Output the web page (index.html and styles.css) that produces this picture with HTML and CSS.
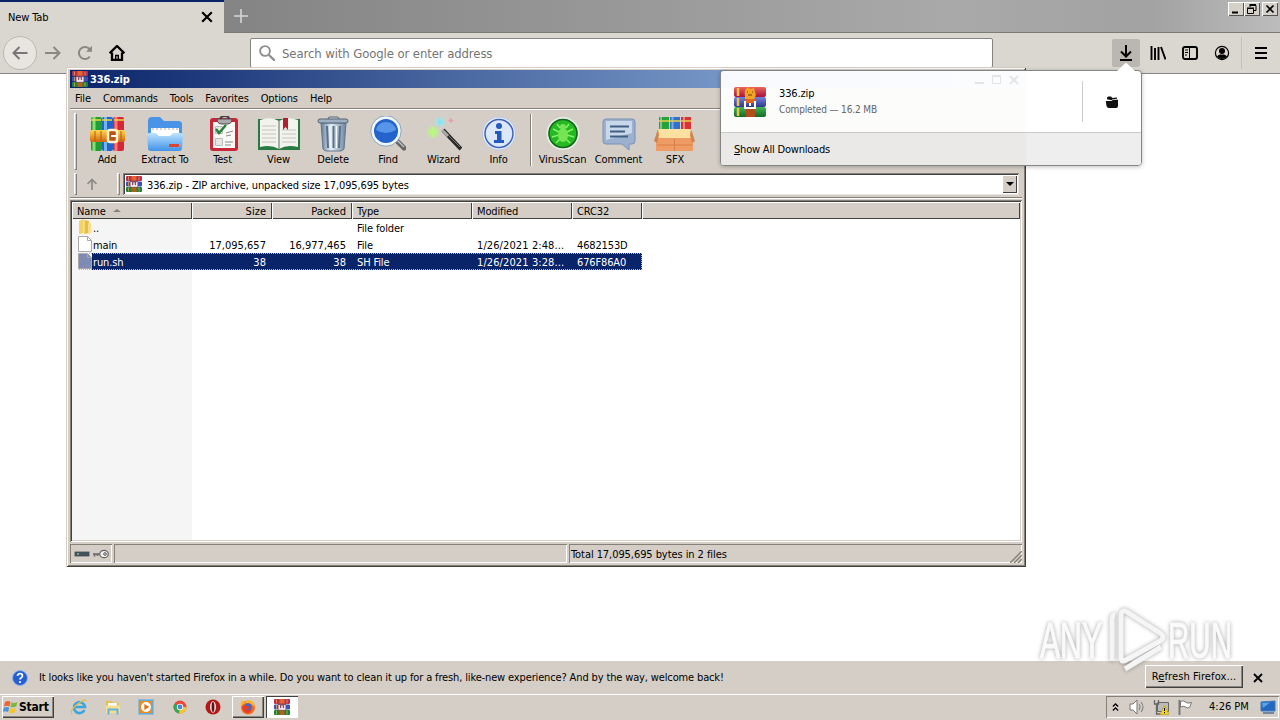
FILE: index.html
```html
<!DOCTYPE html>
<html lang="en">
<head>
    <meta charset="UTF-8" />
    <meta name="viewport" content="width=device-width, initial-scale=1.0"/>
    <title>New Tab</title>
    <link rel="stylesheet" href="styles.css">
</head>
<body>
    <!-- shared icons -->
    <svg class="defs">
        <linearGradient id="bookRed" x2="0" y2="1"><stop stop-color="#ed655c"/><stop offset="1" stop-color="#a8123f"/></linearGradient>
        <linearGradient id="bookBlue" x2="0" y2="1"><stop stop-color="#7383dc"/><stop offset="1" stop-color="#30398f"/></linearGradient>
        <linearGradient id="bookGreen" x2="0" y2="1"><stop stop-color="#42b655"/><stop offset="1" stop-color="#126b25"/></linearGradient>
        <linearGradient id="gold" x2="0" y2="1"><stop stop-color="#ffda51"/><stop offset="1" stop-color="#d3650d"/></linearGradient>
        <linearGradient id="steel"><stop stop-color="#627c98"/><stop offset=".4" stop-color="#e4eff8"/><stop offset="1" stop-color="#6c839d"/></linearGradient>
        <linearGradient id="sky" x2="0" y2="1"><stop stop-color="#bce4ff"/><stop offset="1" stop-color="#4192e8"/></linearGradient>
        <symbol id="winrar" viewBox="0 0 16 16">
            <rect y="0" width="16" height="5" rx="1" fill="#b92c50"/>
            <rect y="5.5" width="16" height="5" rx="1" fill="#4050b0"/>
            <rect y="11" width="16" height="5" rx="1" fill="#1c8236"/>
            <path d="M2.500 .5v4M2.500 6v4M2.500 11.500v4M13 .5v4M13 11.500v4" stroke="#d6a85d" stroke-width=".8"/>
            <path d="M5.500 0h5v5h-5z" fill="#e8622b"/>
            <path d="M5.500 11h5v5h-5z" fill="#b0611e"/>
            <rect x="4" y="4.500" width="8" height="7" rx="1" fill="#8c4a63"/>
            <path d="M5.200 6v4h5.600V6M8 6.500v3" stroke="#fff" stroke-width="1.300" fill="none"/>
        </symbol>
        <symbol id="close" viewBox="0 0 10 10"><path d="M1 1l8 8M9 1L1 9" stroke="currentColor" stroke-width="1.8"/></symbol>
        <symbol id="page" viewBox="0 0 14 16"><path d="M.5.5h9l4 4v11H.5z" fill="currentColor" stroke="#a9a9a9"/><path d="M9.5.5v4h4" fill="none" stroke="#a9a9a9"/></symbol>
    </svg>

    <div class="browser">
        <header class="tabstrip">
            <div class="tab"><span>New Tab</span><svg class="tab-close"><use href="#close"/></svg></div>
            <svg class="new-tab" viewBox="0 0 14 14"><path d="M7 0v14M0 7h14" stroke="#d5d5d5" stroke-width="1.6"/></svg>
            <div class="caption-buttons">
                <svg class="cap" viewBox="0 0 16 14"><path d="M4 10.500h6" stroke="#000" stroke-width="2"/></svg>
                <svg class="cap" viewBox="0 0 16 14"><path d="M6 3.500h6v5h-2M6 2.500h6M6 2v3M3.500 6.500h6v5h-6zM3 6h7" stroke="#000" fill="none"/></svg>
                <svg class="cap cap-x" viewBox="0 0 16 14"><path d="M4.500 3.500l7 7M11.500 3.500l-7 7" stroke="#000" stroke-width="1.700"/></svg>
            </div>
        </header>

        <nav class="navbar">
            <div class="nav-back"><svg viewBox="0 0 16 16"><path d="M15.500 8H1.500M7.500 2l-6 6 6 6" fill="none" stroke="#777" stroke-width="2"/></svg></div>
            <svg class="nav-icon" viewBox="0 0 16 16"><path d="M0 8h14.500M8.500 2l6 6-6 6" fill="none" stroke="#8a8884" stroke-width="2"/></svg>
            <svg class="nav-icon" viewBox="0 0 16 16"><path d="M12.800 11.500A6 6 0 1 1 12 3.600l2 2" fill="none" stroke="#8a8884" stroke-width="2"/><path d="M15 .7v6H9z" fill="#8a8884"/></svg>
            <svg class="nav-icon home" viewBox="0 0 16 16"><path d="M.6 8.300L8 1l7.400 7.300M3 7.500V15h10V7.500" fill="none" stroke="#000" stroke-width="2.300"/><path d="M6.700 15v-4.500h2.600V15" fill="none" stroke="#000" stroke-width="1.400"/></svg>
            <div class="urlbar">
                <svg viewBox="0 0 16 16"><circle cx="6" cy="6" r="4.900" fill="none" stroke="#8f8f8f" stroke-width="1.900"/><path d="M9.700 9.700l6 6" stroke="#8f8f8f" stroke-width="2.300"/></svg>
                <span>Search with Google or enter address</span>
            </div>
            <div class="nav-tools">
                <div class="downloads-btn"><svg viewBox="0 0 16 16"><path d="M8 0v11M3 6.500l5 5 5-5M2 15h12" fill="none" stroke="#000" stroke-width="2"/></svg></div>
                <svg viewBox="0 0 16 16"><path d="M1.500 1v14M5 3v12M8.500 2v13M11 2l4.500 12.500" stroke="#000" stroke-width="1.900"/></svg>
                <svg viewBox="0 0 16 16"><rect x="1" y="2" width="14" height="12" rx="2" fill="none" stroke="#000" stroke-width="1.900"/><path d="M7.500 2v12M3 5h3M3 7.500h3M3 10h2" stroke="#000"/></svg>
                <svg viewBox="0 0 16 16"><circle cx="8" cy="8" r="6.600" fill="none" stroke="#000" stroke-width="1.200"/><circle cx="8" cy="6" r="3" /><path d="M3 11.500q1.500-2 3.200-2h3.600q1.700 0 3.200 2-2 2.500-5 2.500t-5-2.500"/></svg>
                <i class="nav-line"></i>
                <svg class="burger" viewBox="0 0 16 16"><path d="M2 3h12M2 8h12M2 13h12" stroke="#000" stroke-width="2"/></svg>
            </div>
        </nav>

        <main class="page"></main>

        <div class="notice">
            <svg class="notice-icon" viewBox="0 0 16 16"><circle cx="8" cy="8" r="7.500" fill="#255fd0" stroke="#90b3ed"/><path d="M5.500 6q0-2.300 2.500-2.300T10.500 6q0 1-1.300 1.700T8 9.500" stroke="#fff" stroke-width="1.700" fill="none"/><circle cx="8" cy="12" r="1.100" fill="#fff"/></svg>
            <span class="notice-text">It looks like you haven't started Firefox in a while. Do you want to clean it up for a fresh, like-new experience? And by the way, welcome back!</span>
            <button class="refresh">R<u>e</u>fresh Firefox...</button>
            <svg class="notice-close"><use href="#close"/></svg>
        </div>

        <footer class="taskbar">
            <button class="start">
                <svg viewBox="0 0 16 16"><path d="M2 3q3-2 5.500 0L6.500 7.500q-3-1.500-5.500 0z" fill="#ef6331"/><path d="M8.500 3.300q3 1.300 6-.3l-1.300 4.500q-3 1.500-5.700.3z" fill="#76ba3c"/><path d="M.8 8.700q3-1.500 5.500 0L5 13q-3-1.500-5.200 0z" fill="#4894dc"/><path d="M7.300 9q3 1.500 5.700 0l-1.300 4.400q-3 1.500-5.500 0z" fill="#f9c32e"/></svg>
                <b>Start</b>
            </button>
            <div class="launch">
                <svg viewBox="0 0 16 16"><path d="M13.500 11A5.500 5.500 0 1 1 14 8H4" fill="none" stroke="#39a6df" stroke-width="2.600"/><path d="M1 15Q-2 12 6 5.500T15.500 2" fill="none" stroke="#e5bd40" stroke-width="1.300"/></svg>
                <svg viewBox="0 0 16 16"><path d="M1 2h6l1 1.500h6V14H1z" fill="#e3bf55"/><path d="M3 4h9v5H3z" fill="#fff"/><path d="M1 6.500h14V14H1z" fill="#f5df92"/><path d="M3.500 15.500v-5h9v5" stroke="#65b4d8" stroke-width="2" fill="none"/></svg>
                <svg viewBox="0 0 16 16"><rect x=".5" y=".5" width="15" height="15" fill="#62abd8" stroke="#91bbd3"/><path d="M2 2h12v12H2z" fill="#f18b1e"/><circle cx="8" cy="8" r="5" fill="#fff"/><path d="M6.300 5v6l5-3z" fill="#e47212"/></svg>
                <svg viewBox="0 0 16 16"><circle cx="8" cy="8" r="6.500" fill="#e84838"/><path d="M8 8L2.400 4.700A6.500 6.500 0 0 0 7 14.400z" fill="#37a552"/><path d="M8 8h6.500a6.500 6.500 0 0 1-7.500 6.400z" fill="#f4c72d"/><circle cx="8" cy="8" r="3.200" fill="#fff"/><circle cx="8" cy="8" r="2.400" fill="#4688dc"/></svg>
                <svg viewBox="0 0 16 16"><ellipse cx="8" cy="8" rx="7.500" ry="7.500" fill="#b31717"/><ellipse cx="8" cy="8" rx="3" ry="5.700" fill="#f1e6e2"/><ellipse cx="8" cy="8" rx="1.400" ry="5" fill="#5a1717"/></svg>
            </div>
            <div class="task"><svg viewBox="0 0 16 16"><circle cx="8" cy="8.500" r="7" fill="#f46b20"/><path d="M1 8Q0 3 3 1l1 3q3-4 8-2 3 3 3 7-3-5-8-5-4 0-6 4" fill="#ffb52a"/><circle cx="8" cy="8" r="3.800" fill="#4269c9"/><path d="M2 8q3-3 5-1l3 1q-2 3-4 2 2 3 6 0-1 4-5 4-4-1-5-6" fill="#e83c27"/></svg></div>
            <div class="task active"><svg><use href="#winrar"/></svg></div>
            <div class="tray">
                <svg class="chevrons" viewBox="0 0 8 10"><path d="M1 4.500l3-3 3 3M1 9l3-3 3 3" fill="none" stroke="#000" stroke-width="1.500"/></svg>
                <svg viewBox="0 0 16 16"><path d="M1 5h3l4-4v14l-4-4H1z" fill="#fff" stroke="#777"/><path d="M10 5q2 3 0 6M12 3q4 5 0 10" fill="none" stroke="#888" stroke-width="1.200"/></svg>
                <svg viewBox="0 0 16 16"><path d="M4.500 3.500h11v9h-11z" fill="#bbb" stroke="#666"/><path d="M1.500 1v4h4V1M3.500 5v10h4" fill="none" stroke="#666" stroke-width="1.300"/><path d="M11.500 6.500l4.500 9H7z" fill="#f5d420" stroke="#b39610" stroke-width=".6"/><path d="M11.500 9v3M11.500 13v1.200" stroke="#000"/></svg>
                <svg class="flag" viewBox="0 0 16 16"><path d="M2.500 1v15" stroke="#777" stroke-width="2"/><path d="M3.500 2.500q3-1.500 5 .5t6 .5l-2 5q-2 1-4-.5t-5 0z" fill="#fff" stroke="#777"/></svg>
                <span class="clock">4:26 PM</span>
                <svg class="desktop" viewBox="0 0 16 16"><path d="M1 3l14-1v10H1z" fill="#2567bd" stroke="#3c7abf"/><path d="M2 4l8-.5L3 9z" fill="#5ba4e8"/><path d="M3 14h11" stroke="#546f8f" stroke-width="1.500"/></svg>
            </div>
        </footer>
    </div>

    <section class="window">
        <div class="titlebar"><svg><use href="#winrar"/></svg><b>336.zip</b></div>
        <div class="menubar"><span>File</span><span>Commands</span><span>Tools</span><span>Favorites</span><span>Options</span><span>Help</span></div>
        <div class="toolbar">
            <i class="grip"></i>
            <div class="tool w58">
                <svg viewBox="0 0 36 36"><rect x="2" y="1" width="11" height="34" rx="2" fill="#239d36"/><path d="M5 1v34" stroke="#8add74" stroke-width="3"/><rect x="13" y="1" width="11" height="34" rx="2" fill="#2563c8"/><path d="M16.500 1v34" stroke="#6fb5f0" stroke-width="3"/><rect x="24" y="1" width="11" height="34" rx="2" fill="#d62735"/><path d="M27 1v34" stroke="#ff7776" stroke-width="3"/><path d="M2 4h10M13 4h10M25 4h10" stroke="#f0d646" stroke-width="1.500"/><rect x="1" y="14" width="35" height="12" rx="2" fill="url(#gold)"/><path d="M6 15v10M12 15v10M32 15v10" stroke="#b75a10"/><rect x="19" y="14" width="9" height="12" rx="2" fill="#b4541a" stroke="#fff2cc" stroke-width="2.500"/><path d="M22 20h5" stroke="#fff" stroke-width="2"/></svg>
                <span>Add</span>
            </div>
            <div class="tool w58">
                <svg viewBox="0 0 36 36"><path d="M1 5q0-4 4-4h8l4 4h14q4 0 4 3v12H1z" fill="#4a94e8"/><path d="M4 12h28v10H4z" fill="#fff"/><path d="M5 13h26" stroke="#aaa" stroke-dasharray="2 2"/><path d="M0 19q0-2 3-2h6l3 3h11l3-3h7q3 0 3 2l-1 13q0 3-3 3H4q-3 0-3-3z" fill="url(#sky)"/><rect x="22" y="28" width="10" height="3" rx="1" fill="#df412f"/></svg>
                <span>Extract To</span>
            </div>
            <div class="tool w57">
                <svg viewBox="0 0 36 36"><rect x="5" y="2" width="28" height="33" rx="3" fill="#c92637"/><path d="M8 6h22v26H8z" fill="#f9f9f5"/><path d="M12 3q0 5 5 5h5q5 0 5-5z" fill="#aaa" stroke="#534b50"/><path d="M15 3q1-3 5-3t4 3" fill="none" stroke="#473b41" stroke-width="2"/><path d="M10.500 10.500h7v7h-7zM10.500 22.500h7v7h-7z" fill="#e6e6e6" stroke="#bbb"/><path d="M11 13l3 4 7-8" fill="none" stroke="#258137" stroke-width="2.400"/><path d="M21 17l7-2M21 20l5-1M20 26h8M20 29h6" stroke="#888"/></svg>
                <span>Test</span>
            </div>
            <div class="tool w55">
                <svg class="wide" viewBox="0 0 42 36"><path d="M0 3h42v31H0z" fill="#277a42"/><path d="M2 4q11-4 19 1 8-5 19-1v27q-11-3-19 2-8-5-19-2z" fill="#f3f3ed"/><path d="M21 5v28" stroke="#8a9991" stroke-width="1.500"/><path d="M4 10h14M4 14h14M4 18h14M4 22h14M4 26h14M24 14h14M24 18h14M24 22h14M24 26h14" stroke="#c4c5bd"/><path d="M25 2h5v12l-2.500-3-2.500 3z" fill="#b3202d"/></svg>
                <span>View</span>
            </div>
            <div class="tool w54">
                <svg viewBox="0 0 36 36"><path d="M6 7h25l-2 26q-1 2-4 2H12q-3 0-4-2z" fill="url(#steel)" stroke="#61768c"/><path d="M12 10l1 22M18.500 10v22M25 10l-1 22" stroke="#5a7086" stroke-width="2"/><path d="M14.500 10l1 22M21.500 10v22" stroke="#f0f7fd"/><rect x="3" y="3" width="30" height="4" rx="2" fill="#9eb1c2" stroke="#526477"/><path d="M13 3q0-2 2-2h7q2 0 2 2" fill="none" stroke="#526477"/></svg>
                <span>Delete</span>
            </div>
            <div class="tool w56">
                <svg viewBox="0 0 36 36"><path d="M26 24l8 8" stroke="#666" stroke-width="5" stroke-linecap="round"/><path d="M26 23l8 8" stroke="#bec3c4" stroke-width="1.500"/><circle cx="16" cy="15" r="13.500" fill="#2463cb" stroke="#edf6fa" stroke-width="3"/><circle cx="16" cy="15" r="15.200" fill="none" stroke="#7a9cb9" stroke-width=".8"/><path d="M6 14q2-8 10-8t10 8q-10 6-20 0" fill="#5695e8"/></svg>
                <span>Find</span>
            </div>
            <div class="tool w55">
                <svg viewBox="0 0 36 36"><path d="M17 14l18 19" stroke="#292929" stroke-width="4"/><path d="M16 14l6 6" stroke="#aaa" stroke-width="3"/><path d="M22 19l12 12" stroke="#777"/><circle cx="7" cy="16" r="6" fill="#b6f589" opacity=".55"/><path d="M7 10l1.500 4 4 2-4 1.500-1.500 4-2-4-4-1.500 4-2z" fill="#baf780"/><circle cx="14" cy="6" r="5" fill="#9de9f0" opacity=".6"/><path d="M14 1l1 4 4 1-4 1-1 4-2-4-3-1 3-1z" fill="#88e4ef"/><path d="M25 2v5M22.500 4.500h5" stroke="#ee9ca4" stroke-width="1.500"/></svg>
                <span>Wizard</span>
            </div>
            <div class="tool w55">
                <svg viewBox="0 0 36 36"><circle cx="18" cy="17.500" r="16.500" fill="#e8edf6" stroke="#bac9e6"/><circle cx="18" cy="17.500" r="14" fill="#dce7fb" stroke="#3b62b9" stroke-width="1.500"/><circle cx="18" cy="10" r="3" fill="#2559bd"/><path d="M14 15h6.500v9H23v3H13v-3h3v-6h-2z" fill="#2559bd"/></svg>
                <span>Info</span>
            </div>
            <i class="tool-line"></i>
            <div class="tool w55">
                <svg viewBox="0 0 36 36"><circle cx="18" cy="17.500" r="15.500" fill="#14961c" stroke="#e5eee0" stroke-width="2"/><circle cx="18" cy="17.500" r="14" fill="#25ba23" stroke="#176620" stroke-width="1.500"/><g fill="none" stroke="#83f366" stroke-width="1.500"><path d="M12 8l3 4M24 8l-3 4M8 13l6 3M28 13l-6 3M7 21l7-2M29 21l-7-2M11 27l4-4M25 27l-4-4"/></g><ellipse cx="18" cy="19" rx="5" ry="7" fill="#78e455"/><circle cx="18" cy="11" r="3" fill="#78e455"/></svg>
                <span>VirusScan</span>
            </div>
            <div class="tool w57">
                <svg viewBox="0 0 36 36"><path d="M5 3h26q3 0 3 3v19q0 3-3 3h-3v6l-7-6H5q-3 0-3-3V6q0-3 3-3z" fill="#9cb1cf" stroke="#7891b4"/><path d="M5 5h26v12L5 24z" fill="#c9d8e9"/><path d="M9 10.500h19M9 15.500h15M9 20.500h18" stroke="#405d85" stroke-width="1.800"/></svg>
                <span>Comment</span>
            </div>
            <div class="tool w56">
                <svg class="wide" viewBox="0 0 42 36"><path d="M5 1h10v17H5z" fill="#25a338"/><path d="M16 1h10v17H16z" fill="#3271c7"/><path d="M27 1h10v17H27z" fill="#d93434"/><path d="M7 1v12M18.500 1v12M30 1v12" stroke="#fff" stroke-opacity=".4" stroke-width="2"/><path d="M5 5h10M16 5h10M27 5h10" stroke="#e7d04c" stroke-width="1.600"/><path d="M2 20h37v15H2z" fill="#ee9c63"/><path d="M4 13h33l2 9H2z" fill="#fae1a1"/><path d="M4 13l-4 12 3 2 2-8M37 13l4 12-3 2-2-8" fill="#d1824f"/><path d="M20.500 23v12M3 29h35" stroke="#d47e49"/></svg>
                <span>SFX</span>
            </div>
        </div>
        <div class="address">
            <i class="grip"></i>
            <svg class="up" viewBox="0 0 12 12"><path d="M6 12V1.500M1.500 6L6 1.500 10.500 6" fill="none" stroke="#8b8985" stroke-width="1.700"/></svg>
            <i class="grip"></i>
            <div class="path">
                <svg><use href="#winrar"/></svg>
                <span>336.zip - ZIP archive, unpacked size 17,095,695 bytes</span>
                <div class="drop"></div>
            </div>
        </div>
        <div class="files">
            <div class="row head">
                <span>Name <i class="sort"></i></span><span class="num">Size</span><span class="num">Packed</span><span>Type</span><span>Modified</span><span>CRC32</span><span></span>
            </div>
            <div class="row">
                <span class="name"><svg viewBox="0 0 14 16"><path d="M1 2l5-2v14l-5 1z" fill="#f2d263"/><path d="M6 1l5 1v12l-5 1z" fill="#e7bd42"/><path d="M10 4h3v10l-3 1z" fill="#f5df8c"/><path d="M6 1v14" stroke="#fff1a7"/></svg>..</span><span></span><span></span><span>File folder</span><span></span><span></span>
            </div>
            <div class="row">
                <span class="name"><svg class="sheet"><use href="#page"/></svg>main</span><span class="num">17,095,657</span><span class="num">16,977,465</span><span>File</span><span class="date">1/26/2021 2:48...</span><span>4682153D</span>
            </div>
            <div class="row selected">
                <span class="name"><svg class="sheet"><use href="#page"/></svg>run.sh</span><span class="num">38</span><span class="num">38</span><span>SH File</span><span class="date">1/26/2021 3:28...</span><span>676F86A0</span>
            </div>
        </div>
        <div class="status">
            <div class="status-icons">
                <svg viewBox="0 0 16 10"><rect x=".5" y="2.500" width="15" height="5" rx="1" fill="#434f59" stroke="#999"/><path d="M3 5h2" stroke="#b4e8c1"/></svg>
                <svg viewBox="0 0 16 10"><path d="M0 5h8M1.500 5v2.500M4.500 5v2" stroke="#666" stroke-width="1.600"/><ellipse cx="11" cy="5" rx="4.300" ry="3.700" fill="#eee" stroke="#666" stroke-width="1.200"/><circle cx="12" cy="5" r="1.300" fill="none" stroke="#555"/></svg>
            </div>
            <div class="status-pane"></div>
            <div class="status-total"><span>Total 17,095,695 bytes in 2 files</span><svg viewBox="0 0 12 12"><path d="M0 12L12 0M4 12l8-8M8 12l4-4" stroke="#858078" stroke-width="1.500"/></svg></div>
        </div>
    </section>

    <aside class="popup">
        <svg class="arrow" viewBox="0 0 20 10"><path d="M0 10l9-8.500q1-1 2 0l9 8.500z" fill="#fff"/></svg>
        <div class="ghost"><i class="ghost-min"></i><i class="ghost-max"></i><svg><use href="#close"/></svg></div>
        <div class="download">
            <svg class="archive" viewBox="0 0 32 32"><rect y="1" width="32" height="10" rx="2" fill="url(#bookRed)"/><rect y="11" width="32" height="10" rx="2" fill="url(#bookBlue)"/><rect y="21" width="32" height="10" rx="2" fill="url(#bookGreen)"/><path d="M4 2v8M4 12v8M4 22v8" stroke="#f0c449" stroke-width="2.500"/><path d="M12 21h9v10h-9z" fill="#b34d1b"/><path d="M11 11q-1-6 1-8l2-2 2 2 4-1 1 4q2 3-1 7H11z" fill="#f1a522"/><path d="M13 6h1M18 6h1M14 9h4" stroke="#6b350d" stroke-width="1.200"/><path d="M12 13h9v4h-9z" fill="#df6521"/><path d="M11 15v7h10v-7M16 17v3" fill="none" stroke="#fff" stroke-width="2"/></svg>
            <div class="download-info"><span class="download-name">336.zip</span><span class="download-state">Completed — 16.2 MB</span></div>
            <div class="folder-btn"><svg viewBox="0 0 14 14"><path d="M2 4.300V3q0-1.500 1.500-1.500H6L7.500 3l4.500-.5v1.300L7.500 4.300l-1 .9z" fill="#111"/><path d="M.8 6H6.500L8 4.800h5V11q0 2-2 2H4q-2 0-2.500-2z" fill="#111"/></svg></div>
        </div>
        <div class="show-all"><u>S</u>how All Downloads</div>
    </aside>

    <svg class="watermark" viewBox="0 0 214 72">
        <g class="wm-text"><text x="6" y="54" textLength="62" lengthAdjust="spacingAndGlyphs">ANY</text><text x="134" y="54" textLength="64" lengthAdjust="spacingAndGlyphs">RUN</text></g>
        <path class="wm-play" d="M78 57V15q0-4 3-4M87 53V12q0-7 6-4l33 21q6 4 0 8L92 56q-5 3-5-3M91 65l36-22"/>
    </svg>
</body>
</html>
```
FILE: styles.css
```css
* {
    box-sizing: border-box;
    margin: 0;
    padding: 0;
}

body {
    width: 1280px;
    height: 720px;
    overflow: hidden;
    position: relative;
    font-family: 'DejaVu Sans Condensed', 'DejaVu Sans', sans-serif;
    font-stretch: condensed;
    font-size: 11px;
    letter-spacing: -0.14px;
    color: #000;
    background: #fff;
    white-space: nowrap;
}

svg {
    flex: none;
    display: block;
}

.defs {
    position: absolute;
    width: 0;
    height: 0;
}

/* browser */
.browser {
    display: flex;
    flex-direction: column;
    height: 720px;
}

.tabstrip {
    height: 33px;
    display: flex;
    align-items: center;
    background: linear-gradient(to right, #848484 224px, #a9a9a9 950px, #a2a2a2 1150px, #bcbcbc);
    border-bottom: 1px solid #7d7b78;
}

.tab {
    width: 224px;
    height: 33px;
    padding: 0 11px 1px 8px;
    display: flex;
    align-items: center;
    justify-content: space-between;
    background: #dad6d0;
    border-top: 2px solid #0a246a;
    align-self: flex-start;
}

.tab-close {
    width: 12px;
    height: 12px;
}

.new-tab {
    width: 14px;
    height: 14px;
    margin-left: 10px;
}

.caption-buttons {
    display: flex;
    margin-left: auto;
    margin-right: 2px;
    align-self: flex-start;
    padding-top: 2px;
}

.cap {
    width: 16px;
    height: 14px;
    background: #d5d0c8;
    box-shadow: inset 1px 1px #fff, inset -1px -1px #555;
}

.cap-x {
    margin-left: 2px;
}

.navbar {
    height: 41px;
    display: flex;
    align-items: center;
    background: #dad6d0;
    border-bottom: 1px solid #858482;
}

.nav-back {
    width: 34px;
    height: 34px;
    margin: 0 8px 0 3px;
    display: flex;
    align-items: center;
    justify-content: center;
    border: 1px solid #bbb8b4;
    border-radius: 50%;
    background: #e8e5e1;
}

.nav-back svg,
.nav-icon {
    width: 16px;
    height: 16px;
}

.nav-icon {
    margin-right: 16px;
}

.urlbar {
    width: 743px;
    height: 30px;
    margin-left: 109px;
    padding-left: 8px;
    display: flex;
    align-items: center;
    gap: 7px;
    border: 1px solid #858482;
    border-radius: 2px;
    background: #fff;
    color: #757575;
    font-size: 13px;
    letter-spacing: -0.1px;
}

.urlbar svg {
    width: 16px;
    height: 16px;
}

.nav-tools {
    margin-left: auto;
    display: flex;
    align-items: center;
    gap: 16px;
    padding-right: 11px;
}

.nav-tools svg {
    width: 16px;
    height: 16px;
}

.downloads-btn {
    width: 28px;
    height: 28px;
    margin-right: -6px;
    display: flex;
    align-items: center;
    justify-content: center;
    border-radius: 2px;
    background: #bab7b3;
}

.nav-line {
    width: 1px;
    height: 32px;
    margin: 0 -5px 0 -5px;
    background: #c4c0ba;
}

.page {
    flex: 1;
    background: #fff;
}

.notice {
    height: 33px;
    padding: 0 17px 0 12px;
    display: flex;
    align-items: center;
    background: #d5cec6;
}

.notice-icon {
    width: 16px;
    height: 16px;
    margin-right: 11px;
}

.refresh {
    width: 98px;
    height: 23px;
    margin-left: auto;
    margin-right: 10px;
    margin-bottom: 2px;
    border: 0;
    background: #d5cec6;
    box-shadow: inset 1px 1px #fff, inset -1px -1px #404040, inset -2px -2px #8b8680;
    font: inherit;
    letter-spacing: 0.1px;
}

.notice-close {
    width: 10px;
    height: 10px;
}

.taskbar {
    height: 26px;
    display: flex;
    align-items: center;
    background: #d5cec6;
    border-top: 1px solid #fff;
    padding: 0 0 2px 2px;
}

.start {
    width: 52px;
    height: 22px;
    display: flex;
    align-items: center;
    padding-left: 1px;
    border: 0;
    background: #d5cec6;
    box-shadow: inset 1px 1px #fff, inset -1px -1px #404040, inset -2px -2px #8b8680;
    font: inherit;
    font-size: 12px;
    letter-spacing: -0.2px;
}

.start svg {
    width: 16px;
    height: 16px;
}

.launch {
    display: flex;
    gap: 17.6px;
    margin: 0 11px 0 17px;
}

.launch svg {
    width: 16px;
    height: 16px;
}

.task {
    width: 32px;
    height: 22px;
    margin-right: 2px;
    display: flex;
    align-items: center;
    justify-content: center;
    box-shadow: inset 1px 1px #fff, inset -1px -1px #404040, inset -2px -2px #8b8680;
}

.task svg {
    width: 16px;
    height: 16px;
}

.task.active {
    background: #fff;
    box-shadow: inset 1px 1px #404040, inset -1px -1px #fff;
}

.tray {
    width: 173px;
    height: 22px;
    margin-left: auto;
    margin-right: 1px;
    padding: 0 3px 0 6px;
    display: flex;
    align-items: center;
    box-shadow: inset 1px 1px #858078, inset -1px -1px #fff;
}

.tray svg {
    width: 16px;
    height: 16px;
    margin-right: 8px;
}

.tray .chevrons {
    width: 7px;
    height: 10px;
    margin-right: 10px;
}

.tray .desktop {
    margin: 0 0 0 auto;
}

.clock {
    margin-left: 8px;
    letter-spacing: 0;
}

/* archive window */
.window {
    position: absolute;
    left: 66px;
    top: 67px;
    width: 960px;
    height: 500px;
    padding: 3px 4px;
    display: flex;
    flex-direction: column;
    background: #d5cec6;
    box-shadow: inset 1px 1px #d5cec6, inset -1px -1px #404040, inset 2px 2px #fff, inset -2px -2px #858078;
}

.titlebar {
    height: 18px;
    display: flex;
    align-items: center;
    gap: 2px;
    padding-left: 2px;
    background: linear-gradient(to right, #0a246a, #a6caf0);
    color: #fff;
    font-size: 11px;
}

.titlebar svg {
    width: 16px;
    height: 16px;
}

.menubar {
    height: 21px;
    display: flex;
    align-items: center;
    gap: 12px;
    padding-left: 5px;
    border-bottom: 1px solid #858078;
}

.toolbar {
    height: 61px;
    padding: 3px 0 0 4px;
    display: flex;
    border-top: 1px solid #fff;
}

.grip {
    width: 3px;
    height: 57px;
    border: 1px solid;
    border-color: #fff #858078 #858078 #fff;
    flex: none;
}

.toolbar .grip {
    margin-right: 1px;
}

.tool {
    display: flex;
    flex-direction: column;
    align-items: center;
    gap: 1px;
    padding-top: 3px;
}

.tool svg {
    width: 36px;
    height: 36px;
}

.tool .wide {
    width: 42px;
}

.w54 { width: 54px; }
.w55 { width: 55px; }
.w56 { width: 56px; }
.w57 { width: 57px; }
.w58 { width: 58px; }

.tool-line {
    width: 2px;
    height: 52px;
    margin: 1px 3px 0 4px;
    border-left: 1px solid #858078;
    border-right: 1px solid #fff;
}

.address {
    height: 28px;
    padding: 3px 3px 2px 4px;
    display: flex;
    align-items: center;
    border-bottom: 1px solid #858078;
    box-shadow: 0 1px #fff;
}

.address .grip {
    height: 22px;
}

.up {
    width: 12px;
    height: 12px;
    margin: 0 19px 0 9px;
}

.path {
    flex: 1;
    height: 22px;
    margin-left: 3px;
    padding: 0 2px;
    display: flex;
    align-items: center;
    gap: 5px;
    background: #fff;
    box-shadow: inset 1px 1px #858078, inset -1px -1px #e8e4dd, inset 2px 2px #404040;
    letter-spacing: -0.12px;
}

.path svg {
    width: 16px;
    height: 16px;
    margin-left: 1px;
}

.path span {
    padding-top: 2px;
}

.drop {
    width: 15px;
    height: 18px;
    margin-left: auto;
    display: flex;
    align-items: center;
    justify-content: center;
    background: #d5cec6;
    box-shadow: inset 1px 1px #fff, inset -1px -1px #404040;
}

.drop::before {
    content: '';
    border: 4px solid transparent;
    border-top-color: #000;
    border-bottom: 0;
}

.files {
    height: 342px;
    margin-top: 2px;
    padding: 2px;
    background: linear-gradient(to right, #f5f5f5 122px, #fff 122px);
    box-shadow: inset 1px 1px #858078, inset -1px -1px #fff, inset 2px 2px #404040, inset -2px -2px #d5cec6;
}

.row {
    display: grid;
    grid-template-columns: 120px 80px 80px 120px 100px 70px 1fr;
    height: 17px;
    line-height: 19px;
}

.row span {
    height: 17px;
    padding: 0 5px;
}

.row .num {
    padding-right: 6px;
    text-align: right;
    letter-spacing: 0.02px;
}

.row .date {
    padding-right: 0;
    letter-spacing: 0.1px;
}

.row.head span {
    background: #d5cec6;
    box-shadow: inset 1px 1px #fff, inset -1px -1px #404040;
}

.sort {
    display: inline-block;
    margin: 0 0 3px 4px;
    border: 4px solid transparent;
    border-top: 0;
    border-bottom: 3px solid #858078;
}

.row .name {
    display: flex;
    padding-left: 6px;
    gap: 1px;
}

.name svg {
    width: 14px;
    height: 16px;
}

.sheet {
    color: #fff;
}

.row.selected {
    width: 570px;
    grid-template-columns: 120px 80px 80px 120px 100px 70px;
    color: #fff;
    background: linear-gradient(#0a246a, #0a246a) 20px 0 no-repeat;
    outline: 1px dotted #d5b96a;
    outline-offset: -1px;
    clip-path: inset(0 0 0 6px);
}

.selected .sheet {
    color: #7e8bb3;
}

.status {
    height: 20px;
    margin-top: 2px;
    display: flex;
    gap: 2px;
}

.status > div {
    height: 19px;
    display: flex;
    align-items: center;
    box-shadow: inset 1px 1px #858078, inset -1px -1px #fff;
}

.status-icons {
    width: 42px;
    padding-left: 4px;
    gap: 3px;
}

.status-icons svg {
    width: 16px;
    height: 10px;
}

.status-pane {
    width: 453px;
}

.status-total {
    flex: 1;
    padding-left: 2px;
    justify-content: space-between;
    letter-spacing: -0.07px;
}

.status-total span {
    padding-top: 1px;
}

.status-total svg {
    width: 12px;
    height: 12px;
    align-self: flex-end;
}

/* downloads panel */
.popup {
    position: absolute;
    left: 720px;
    top: 70px;
    width: 422px;
    height: 96px;
    display: flex;
    flex-direction: column;
    border: 1px solid #858585;
    border-radius: 4px;
    background: linear-gradient(to right, #fcfcfa 304px, #fff 306px);
    box-shadow: 0 1px 4px rgba(0, 0, 0, 0.25);
}

.arrow {
    position: absolute;
    left: 395px;
    top: -9px;
    width: 20px;
    height: 10px;
}

.ghost {
    position: absolute;
    left: 0;
    top: 0;
    width: 301px;
    height: 17px;
    padding-right: 3px;
    display: flex;
    align-items: center;
    justify-content: flex-end;
    gap: 8px;
    border-radius: 3px 0 0 0;
    background: linear-gradient(to right, #f7f9fc, #fafcfe);
    color: #e4e4e4;
}

.ghost i {
    width: 9px;
    height: 9px;
    border-bottom: 2px solid #e4e4e4;
}

.ghost .ghost-max {
    border: 1px solid #e4e4e4;
    border-top-width: 2px;
}

.ghost svg {
    width: 10px;
    height: 10px;
}

.download {
    height: 61px;
    display: flex;
    align-items: center;
    padding-left: 13px;
    z-index: 1;
}

.archive {
    width: 32px;
    height: 32px;
}

.download-info {
    display: flex;
    flex-direction: column;
    gap: 4px;
    margin-left: 13px;
    padding-bottom: 2px;
}

.download-state {
    font-size: 10px;
    color: #666;
}

.folder-btn {
    width: 59px;
    height: 41px;
    margin-left: auto;
    display: flex;
    align-items: center;
    justify-content: center;
    border-left: 1px solid #ccc;
}

.folder-btn svg {
    width: 14px;
    height: 14px;
}

.show-all {
    flex: 1;
    padding-left: 13px;
    display: flex;
    align-items: center;
    border-top: 1px solid #c9c9c9;
    border-radius: 0 0 3px 3px;
    background: linear-gradient(to right, #eae9e7 304px, #eee 306px);
    letter-spacing: -0.2px;
}

.watermark {
    position: absolute;
    left: 1034px;
    top: 604px;
    width: 214px;
    height: 72px;
    filter: drop-shadow(0 0 2px rgba(0, 0, 0, 0.35));
}

.wm-text {
    font-family: 'Liberation Sans', sans-serif;
    font-size: 50px;
    letter-spacing: 0;
    fill: #fafafa;
    stroke: #fafafa;
    stroke-width: 1;
}

.wm-play {
    fill: none;
    stroke: #f5f5f5;
    stroke-width: 5;
}
```
